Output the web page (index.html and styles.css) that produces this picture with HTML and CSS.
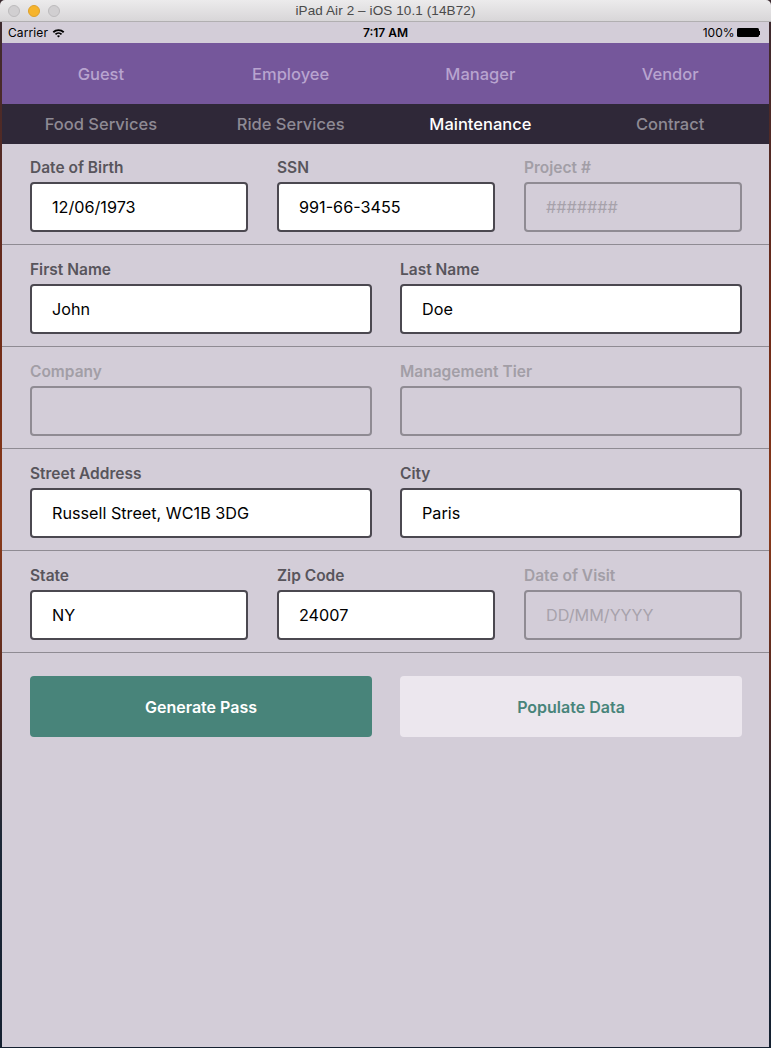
FILE: index.html
```html
<!DOCTYPE html>
<html lang="en">
<head>
<meta charset="utf-8">
<title>iPad Air 2 – iOS 10.1 (14B72)</title>
<link rel="stylesheet" href="styles.css">
</head>
<body>
<div class="window">
  <div class="titlebar">
    <div class="lights">
      <span class="light"></span>
      <span class="light orange"></span>
      <span class="light"></span>
    </div>
    <div class="title">iPad Air 2 – iOS 10.1 (14B72)</div>
  </div>
  <div class="screen">
    <div class="statusbar">
      <div class="carrier">Carrier
        <svg class="wifi" width="13" height="10" viewBox="0 0 12 9">
          <path d="M0.6 3.2 A7.6 7.6 0 0 1 11.4 3.2 L10.2 4.4 A5.9 5.9 0 0 0 1.8 4.4 Z" fill="#000"/>
          <path d="M2.6 5.2 A4.8 4.8 0 0 1 9.4 5.2 L8.2 6.4 A3.1 3.1 0 0 0 3.8 6.4 Z" fill="#000"/>
          <path d="M4.6 7.2 A2 2 0 0 1 7.4 7.2 L6 8.6 Z" fill="#000"/>
        </svg>
      </div>
      <div class="time">7:17 AM</div>
      <div class="battery">100%
        <span class="batt"><span class="batt-body"></span><span class="batt-nub"></span></span>
      </div>
    </div>
    <nav class="tabs primary">
      <div class="tab">Guest</div>
      <div class="tab">Employee</div>
      <div class="tab">Manager</div>
      <div class="tab">Vendor</div>
    </nav>
    <nav class="tabs secondary">
      <div class="tab">Food Services</div>
      <div class="tab">Ride Services</div>
      <div class="tab active">Maintenance</div>
      <div class="tab">Contract</div>
    </nav>
    <div class="form">
      <section class="row first three">
        <div class="field"><label class="label">Date of Birth</label><div class="input">12/06/1973</div></div>
        <div class="field"><label class="label">SSN</label><div class="input">991-66-3455</div></div>
        <div class="field disabled"><label class="label">Project #</label><div class="input placeholder">#######</div></div>
      </section>
      <section class="row two">
        <div class="field"><label class="label">First Name</label><div class="input">John</div></div>
        <div class="field"><label class="label">Last Name</label><div class="input">Doe</div></div>
      </section>
      <section class="row two">
        <div class="field disabled"><label class="label">Company</label><div class="input"></div></div>
        <div class="field disabled"><label class="label">Management Tier</label><div class="input"></div></div>
      </section>
      <section class="row two">
        <div class="field"><label class="label">Street Address</label><div class="input">Russell Street, WC1B 3DG</div></div>
        <div class="field"><label class="label">City</label><div class="input">Paris</div></div>
      </section>
      <section class="row three">
        <div class="field"><label class="label">State</label><div class="input">NY</div></div>
        <div class="field"><label class="label">Zip Code</label><div class="input">24007</div></div>
        <div class="field disabled"><label class="label">Date of Visit</label><div class="input placeholder">DD/MM/YYYY</div></div>
      </section>
      <div class="actions">
        <button class="btn primary-btn">Generate Pass</button>
        <button class="btn secondary-btn">Populate Data</button>
      </div>
    </div>
  </div>
</div>
</body>
</html>
```
FILE: styles.css
```css
html, body {
  margin: 0;
  padding: 0;
}
body {
  width: 771px;
  height: 1048px;
  overflow: hidden;
  background: linear-gradient(180deg, #3a2a30 0%, #6e2a18 30%, #8a3a1a 50%, #5a2a20 65%, #1c2838 80%, #142030 100%);
  font-family: Inter, "Open Sans", "Liberation Sans", sans-serif;
}
.window {
  display: flex;
  flex-direction: column;
  height: 1047px;
}
.titlebar {
  height: 22px;
  flex: 0 0 22px;
  box-sizing: border-box;
  background: linear-gradient(180deg, #ecebec 0%, #d8d6d8 100%);
  border-bottom: 1px solid #b1afb1;
  border-radius: 5px 5px 0 0;
  position: relative;
  display: flex;
  align-items: center;
  justify-content: center;
}
.lights {
  position: absolute;
  left: 8px;
  top: 5px;
  display: flex;
  gap: 8px;
}
.light {
  width: 12px;
  height: 12px;
  border-radius: 50%;
  box-sizing: border-box;
  background: #d1cfd1;
  border: 1px solid #bdbbbd;
}
.light.orange {
  background: #f6b42c;
  border-color: #dea02a;
}
.title {
  font-family: "Liberation Sans", Arial, sans-serif;
  font-size: 13.5px;
  color: #4a4a4a;
  letter-spacing: 0.1px;
}
.screen {
  flex: 1;
  margin: 0 2px;
  background: #d3cdd8;
  display: flex;
  flex-direction: column;
}
.statusbar {
  height: 21px;
  flex: 0 0 21px;
  display: flex;
  align-items: center;
  justify-content: space-between;
  padding: 0 9px 0 6px;
  font-size: 12px;
  color: #000;
  position: relative;
}
.carrier {
  display: flex;
  align-items: center;
  gap: 4px;
  letter-spacing: 0.1px;
}
.time {
  position: absolute;
  left: 0;
  right: 0;
  text-align: center;
  font-weight: 600;
  pointer-events: none;
}
.battery {
  display: flex;
  align-items: center;
  gap: 2px;
}
.batt {
  display: flex;
  align-items: center;
}
.batt-body {
  width: 22px;
  height: 9px;
  background: #000;
  border-radius: 1.5px;
}
.batt-nub {
  width: 1.5px;
  height: 4px;
  background: #000;
}
.tabs {
  display: grid;
  grid-template-columns: repeat(4, 1fr);
  padding: 0 4px;
  font-size: 16.5px;
  font-weight: 500;
}
.tab {
  display: flex;
  align-items: center;
  justify-content: center;
}
.tabs.primary {
  height: 61px;
  flex: 0 0 61px;
  background: #75579b;
  color: #b8a4cf;
}
.tabs.secondary {
  height: 40px;
  flex: 0 0 40px;
  background: #2f2838;
  color: #8e8a94;
}
.tabs.secondary .tab.active {
  color: #ffffff;
}
.form {
  display: flex;
  flex-direction: column;
}
.row {
  display: grid;
  padding: 16px 27px 12px 28px;
  border-bottom: 1px solid #8f8b93;
}
.row.first {
  padding-top: 15px;
}
.row.three {
  grid-template-columns: repeat(3, 1fr);
  column-gap: 29px;
}
.row.two {
  grid-template-columns: repeat(2, 1fr);
  column-gap: 28px;
}
.field {
  display: flex;
  flex-direction: column;
  gap: 5px;
}
.label {
  height: 18px;
  line-height: 18px;
  font-size: 15.5px;
  font-weight: 600;
  color: #58555c;
}
.input {
  height: 50px;
  box-sizing: border-box;
  border: 2px solid #4b4850;
  border-radius: 4px;
  background: #ffffff;
  padding: 0 20px;
  display: flex;
  align-items: center;
  font-size: 16.2px;
  color: #000;
}
.field.disabled .label {
  color: #a29ea6;
}
.field.disabled .input {
  background: transparent;
  border-color: #8f8b93;
}
.input.placeholder {
  color: #a7a2ab;
}
.actions {
  display: grid;
  grid-template-columns: repeat(2, 1fr);
  column-gap: 28px;
  padding: 23px 27px 0 28px;
}
.btn {
  height: 61px;
  border: none;
  border-radius: 4px;
  font-family: Inter, "Open Sans", "Liberation Sans", sans-serif;
  font-size: 16px;
  font-weight: 600;
  cursor: pointer;
}
.primary-btn {
  background: #48847a;
  color: #ffffff;
}
.secondary-btn {
  background: #ece7ee;
  color: #48847a;
}
```
